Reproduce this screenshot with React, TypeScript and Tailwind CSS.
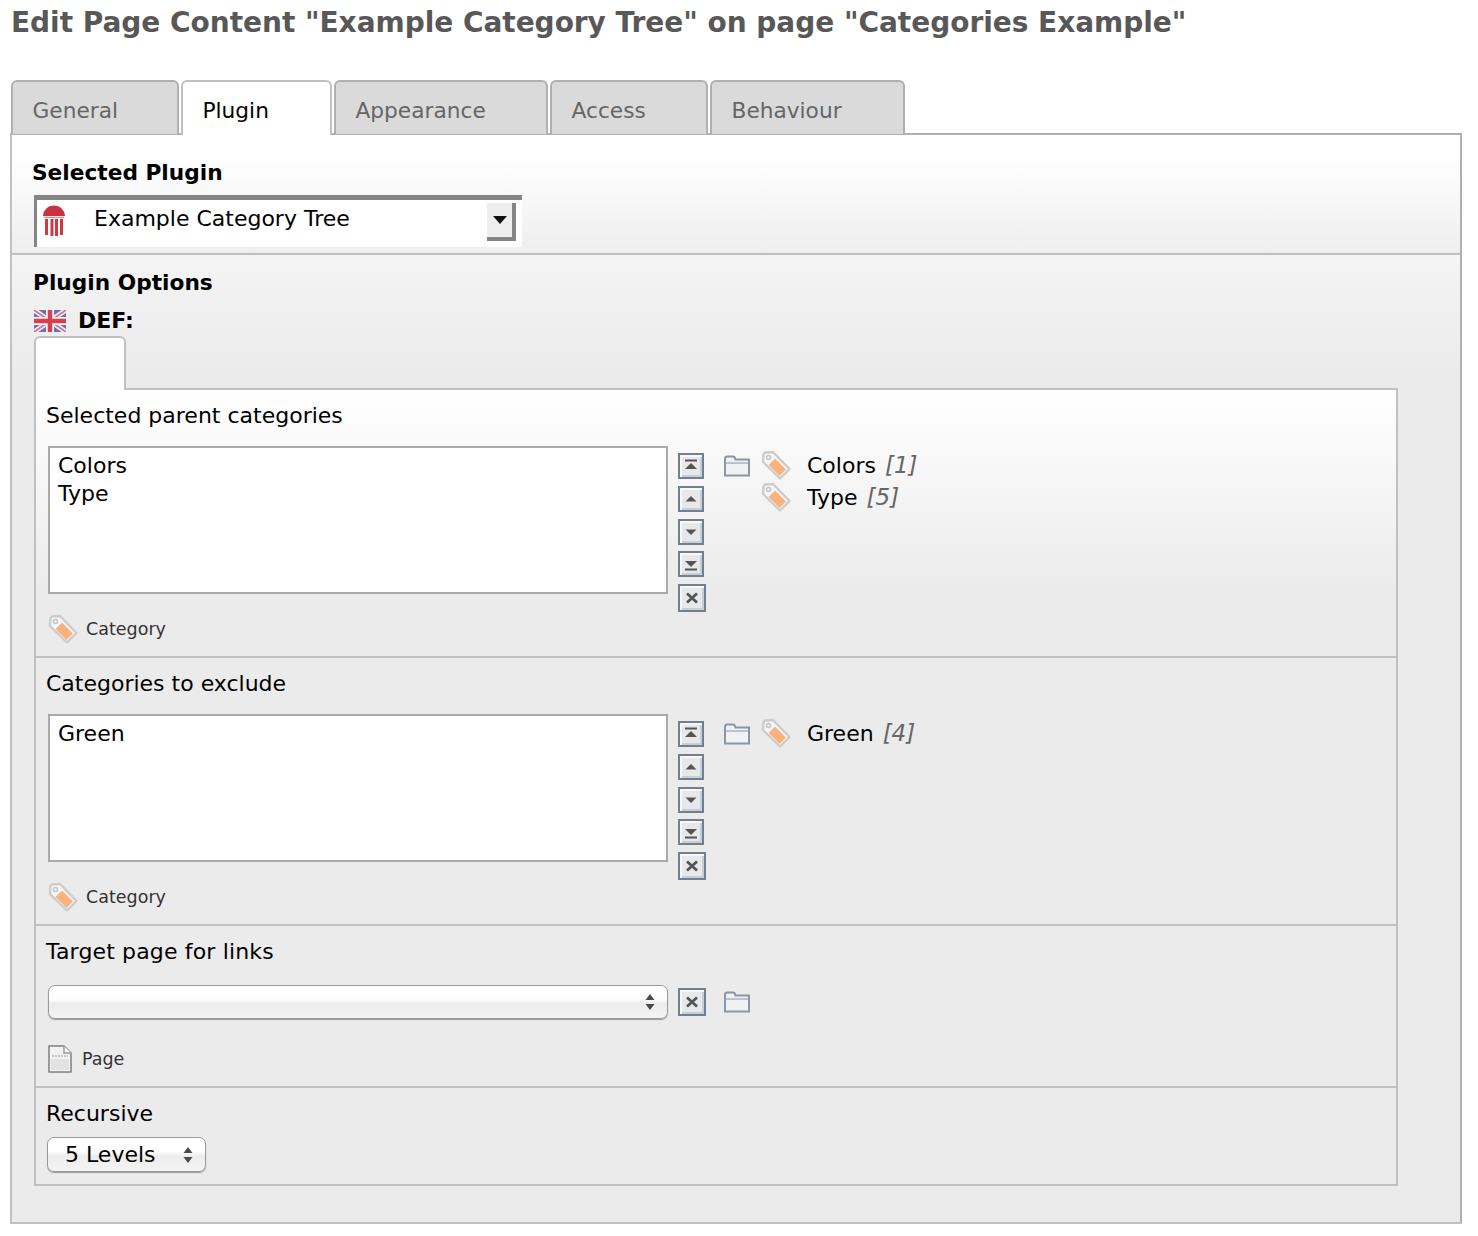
const FONT = "font-['DejaVu_Sans',sans-serif]";

const TABS = [
  { label: "General", width: "w-[168px]" },
  { label: "Plugin", width: "w-[151px]", active: true },
  { label: "Appearance", width: "w-[214px]" },
  { label: "Access", width: "w-[158px]" },
  { label: "Behaviour", width: "w-[195px]" },
];

function TagIcon({ className = "" }: { className?: string }) {
  return (
    <svg width="30" height="30" viewBox="0 0 30 30" className={`shrink-0 ${className}`}>
      <path d="M2.5 4 L4 2.5 L12 2 L28.5 19 L19 28.5 L2 12 Z" fill="#f6f6f6" stroke="#cccccc" strokeWidth="2.4" strokeLinejoin="round" />
      <circle cx="7.5" cy="7.5" r="2" fill="none" stroke="#c4c4c4" strokeWidth="1.5" />
      <path d="M14 8.5 L25 19.5 L18.5 26 L7.5 15 Z" fill="#fbb27c" />
    </svg>
  );
}

function FolderIcon() {
  return (
    <svg width="26" height="22" viewBox="0 0 26 22" className="shrink-0">
      <path d="M1 20.5 V4 Q1 1.5 3 1.5 H9 Q11 1.5 11.5 4.5 H25 V20.5 Z" fill="#f0f1f3" stroke="#8996a6" strokeWidth="2" />
      <path d="M2 8 H24" stroke="#aab3bf" strokeWidth="1.5" />
    </svg>
  );
}

function PageIcon() {
  return (
    <svg width="24" height="28" viewBox="0 0 24 28" className="shrink-0">
      <path d="M1 1 H16 L23 8 V27 H1 Z" fill="#f2f2f2" stroke="#7f7f7f" strokeWidth="1.5" />
      <path d="M16 1 V8 H23" fill="#fff" stroke="#9a9a9a" strokeWidth="1.5" />
      <path d="M4 11 H20" stroke="#b5b5b5" strokeWidth="1.5" strokeDasharray="2 1" />
      <rect x="3" y="14" width="18" height="11" fill="#e2e2e2" />
    </svg>
  );
}

function TempleIcon() {
  return (
    <svg width="24" height="32" viewBox="0 0 24 32" className="shrink-0">
      <path d="M1 12 Q2 2 12 1.5 Q22 2 23 12 Z" fill="#c8323f" />
      <path d="M2 13.5 H22" stroke="#e58e95" strokeWidth="1.5" />
      <path d="M4.5 15 V31 M10 15 V32 M14.5 15 V32 M19.5 15 V31" stroke="#cc3a46" strokeWidth="3" />
    </svg>
  );
}

function UkFlag() {
  return (
    <svg width="32" height="22" viewBox="0 0 32 22" className="shrink-0">
      <rect width="32" height="22" fill="#6474bb" />
      <path d="M0 0 L32 22 M32 0 L0 22" stroke="#f0e8ee" strokeWidth="5" />
      <path d="M0 0 L32 22 M32 0 L0 22" stroke="#d0708a" strokeWidth="1.5" />
      <path d="M16 0 V22 M0 11 H32" stroke="#f7f2f4" strokeWidth="8" />
      <path d="M16 0 V22 M0 11 H32" stroke="#d9404f" strokeWidth="4.5" />
    </svg>
  );
}

type MoveKind = "top" | "up" | "down" | "bottom" | "remove";

function MoveButton({ kind }: { kind: MoveKind }) {
  const wide = kind === "remove";
  return (
    <div
      className={`flex items-center justify-center border-2 border-[#727f8e] bg-[#e6e8ec] shadow-[inset_2px_2px_0_#f8f8f8,inset_-2px_-2px_0_#c9ced5] ${
        wide ? "h-[28px] w-[28px]" : "h-[26px] w-[26px]"
      }`}
    >
      <svg width="14" height="14" viewBox="0 0 14 14">
        {kind === "top" && (
          <>
            <path d="M1 1.5 H13" stroke="#555" strokeWidth="2" />
            <path d="M7 4 L13 10 H1 Z" fill="#555" />
          </>
        )}
        {kind === "up" && <path d="M7 4 L12.5 9.5 H1.5 Z" fill="#555" />}
        {kind === "down" && <path d="M7 10 L12.5 4.5 H1.5 Z" fill="#555" />}
        {kind === "bottom" && (
          <>
            <path d="M7 10 L13 4 H1 Z" fill="#555" />
            <path d="M1 12.5 H13" stroke="#555" strokeWidth="2" />
          </>
        )}
        {kind === "remove" && <path d="M2 2.5 L12 11.5 M12 2.5 L2 11.5" stroke="#555" strokeWidth="2.8" />}
      </svg>
    </div>
  );
}

function MoveButtons() {
  return (
    <div className="flex flex-col gap-[7px]">
      <MoveButton kind="top" />
      <MoveButton kind="up" />
      <MoveButton kind="down" />
      <div className="-mt-px">
        <MoveButton kind="bottom" />
      </div>
      <MoveButton kind="remove" />
    </div>
  );
}

function SelectArrows() {
  return (
    <svg width="10" height="18" viewBox="0 0 10 18" className="shrink-0">
      <path d="M5 1 L9.5 7 H0.5 Z M5 17 L9.5 11 H0.5 Z" fill="#4a4a4a" />
    </svg>
  );
}

function CategoryField({
  label,
  selected,
  options,
  className,
}: {
  label: string;
  selected: string[];
  options: { name: string; id: number }[];
  className?: string;
}) {
  return (
    <div className={`h-[268px] border-b-2 border-[#c0c0c0] px-[10px] pt-[11px] ${className ?? ""}`}>
      <div className="h-[30px] text-[22px] leading-[30px] text-black">{label}</div>
      <div className="mt-[15px] flex items-start pl-[2px]">
        <div className="h-[148px] w-[620px] border-2 border-[#aaaaaa] bg-white px-[8px] pt-[4px] text-[22px] leading-[28px] text-black">
          {selected.map((item) => (
            <div key={item}>{item}</div>
          ))}
        </div>
        <div className="ml-[10px] pt-[7px]">
          <MoveButtons />
        </div>
        <div className="ml-[18px] pt-[9px]">
          <FolderIcon />
        </div>
        <div className="ml-[11px] flex flex-col gap-[2px] pt-[4px]">
          {options.map((option) => (
            <div key={option.id} className="flex h-[30px] items-center gap-[16px] text-[22px] text-black">
              <TagIcon />
              <span>
                {option.name} <em className="ml-[2px] text-[23px] text-[#666666]">[{option.id}]</em>
              </span>
            </div>
          ))}
        </div>
      </div>
      <div className="-mt-[2px] flex items-center gap-[8px] pl-[2px] pt-[4px] text-[17.5px] text-[#333333]">
        <TagIcon />
        <span>Category</span>
      </div>
    </div>
  );
}

export default function App() {
  return (
    <div className={`h-[1236px] w-[1478px] overflow-hidden bg-white pl-[10px] ${FONT}`}>
      <h1 className="pt-[5px] pl-px text-[28px] leading-[36px] font-bold tracking-[-0.03px] text-[#585858]">
        Edit Page Content "Example Category Tree" on page "Categories Example"
      </h1>

      <div className="mt-[39px] flex h-[54px] gap-[2px] pl-px">
        {TABS.map((tab) => (
          <div
            key={tab.label}
            className={`rounded-t-[6px] border-2 border-[#b0b0b0] pl-[19.5px] pt-[14px] text-[21.7px] leading-[30px] ${tab.width} ${
              tab.active
                ? "relative z-10 h-[55px] border-b-0 border-[#c0c0c0] bg-white text-black"
                : "h-[54px] border-b-0 bg-[#dadada] text-[#666666]"
            }`}
          >
            {tab.label}
          </div>
        ))}
      </div>

      <div className="-mt-px h-[1091px] w-[1452px] border-2 border-r-[#b0b0b0] border-b-[#c0c0c0] border-l-[#c0c0c0] border-t-[#b0b0b0] bg-[#ebebeb]">
        <div className="h-[120px] border-b-2 border-[#c0c0c0] bg-[linear-gradient(#ffffff_20px,#eeeeee)] pl-[20px] pt-[23px]">
          <div className="h-[30px] text-[21.7px] leading-[30px] font-bold text-black">Selected Plugin</div>
          <div className="relative mt-[7px] ml-[2px] flex h-[52px] w-[488px] items-start border-t-[5px] border-l-[3px] border-t-[#858585] border-l-[#858585] bg-white pl-[5px] pt-[4px]">
            <TempleIcon />
            <span className="ml-[28px] text-[22px] leading-[30px] text-black">Example Category Tree</span>
            <div className="absolute top-[3px] right-[6px] flex h-[38px] w-[29px] items-center justify-center border-r-4 border-b-4 border-[#858585] bg-[#eeeeee]">
              <svg width="14" height="8" viewBox="0 0 14 8">
                <path d="M0 0 H14 L7 8 Z" fill="#111" />
              </svg>
            </div>
          </div>
        </div>

        <div className="bg-[linear-gradient(#f4f4f4,#ebebeb_120px)] pl-[22px] pt-[13px]">
          <div className="-ml-px h-[30px] text-[21.7px] leading-[30px] font-bold text-black">Plugin Options</div>
          <div className="mt-[10px] flex h-[26px] items-center gap-[12px] text-[22px] font-bold text-black">
            <UkFlag />
            <span className="-mt-[2px]">DEF:</span>
          </div>
          <div className="relative z-10 mt-[2px] h-[54px] w-[92px] rounded-t-[6px] border-2 border-b-0 border-[#c0c0c0] bg-white" />
          <div className="-mt-[2px] h-[798px] w-[1364px] border-2 border-[#c0c0c0]">
            <CategoryField
              label="Selected parent categories"
              selected={["Colors", "Type"]}
              options={[
                { name: "Colors", id: 1 },
                { name: "Type", id: 5 },
              ]}
              className="bg-[linear-gradient(#ffffff,#ebebeb_200px)]"
            />
            <CategoryField label="Categories to exclude" selected={["Green"]} options={[{ name: "Green", id: 4 }]} />

            <div className="h-[162px] border-b-2 border-[#c0c0c0] px-[10px] pt-[11px]">
              <div className="h-[30px] text-[22px] leading-[30px] tracking-[0.15px] text-black">Target page for links</div>
              <div className="mt-[18px] flex items-center pl-[2px]">
                <div className="flex h-[34px] w-[620px] items-center justify-end rounded-[7px] border border-[#9a9a9a] bg-[linear-gradient(#ffffff_40%,#ececec_55%,#f4f4f4)] pr-[12px] shadow-[0_1px_1px_#999]">
                  <SelectArrows />
                </div>
                <div className="ml-[10px]">
                  <MoveButton kind="remove" />
                </div>
                <div className="ml-[18px]">
                  <FolderIcon />
                </div>
              </div>
              <div className="mt-[26px] flex items-center gap-[10px] pl-[2px] text-[17.5px] text-[#333333]">
                <PageIcon />
                <span>Page</span>
              </div>
            </div>

            <div className="px-[10px] pt-[11px]">
              <div className="h-[30px] text-[22px] leading-[30px] text-black">Recursive</div>
              <div className="mt-[8px] ml-px flex h-[35px] w-[159px] items-center justify-between rounded-[7px] border border-[#9a9a9a] bg-[linear-gradient(#ffffff_40%,#ececec_55%,#f4f4f4)] pr-[12px] pl-[17px] text-[22px] text-black shadow-[0_1px_1px_#999]">
                <span>5 Levels</span>
                <SelectArrows />
              </div>
            </div>
          </div>
        </div>
      </div>
    </div>
  );
}
